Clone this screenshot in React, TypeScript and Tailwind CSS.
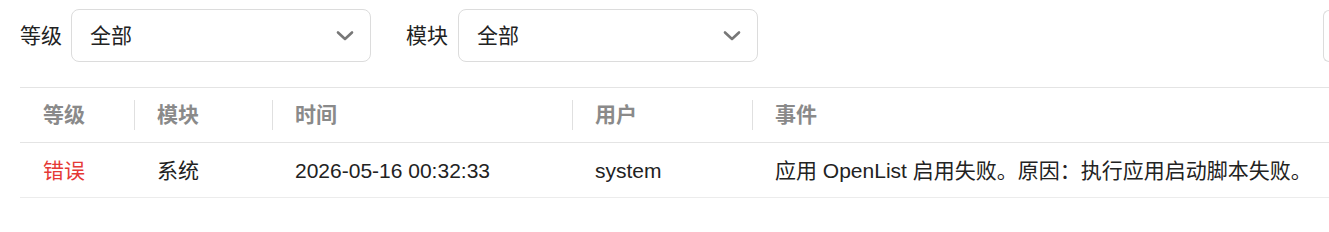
import React from "react";

function Chevron() {
  return (
    <svg width="18" height="12" viewBox="0 0 18 12" fill="none">
      <path d="M2 2.5 L9 9 L16 2.5" stroke="#777" strokeWidth="2.6" strokeLinecap="round" strokeLinejoin="round" />
    </svg>
  );
}

function Select({ value }: { value: string }) {
  return (
    <div className="w-[300px] h-[53px] border border-[#dcdcdc] rounded-[8px] flex items-center justify-between pl-[18px] pr-[16px] bg-white">
      <span className="text-[21px] text-[#222]">{value}</span>
      <Chevron />
    </div>
  );
}

export default function App() {
  const font = { fontFamily: '"Liberation Sans", "Noto Sans CJK SC", sans-serif' };
  const headers = [
    { t: "等级", w: "w-[114px]" },
    { t: "模块", w: "w-[138px]" },
    { t: "时间", w: "w-[300px]" },
    { t: "用户", w: "w-[180px]" },
    { t: "事件", w: "flex-1" },
  ];
  const row = [
    { t: "错误", w: "w-[114px]", c: "text-[#e53935]" },
    { t: "系统", w: "w-[138px]", c: "text-[#222]" },
    { t: "2026-05-16 00:32:33", w: "w-[300px]", c: "text-[#222]" },
    { t: "system", w: "w-[180px]", c: "text-[#222]" },
    { t: "应用 OpenList 启用失败。原因：执行应用启动脚本失败。", w: "flex-1", c: "text-[#222]" },
  ];
  return (
    <div className="w-[1329px] h-[232px] bg-white overflow-hidden" style={font}>
      <div className="flex items-center pl-[20px] pt-[9px] h-[62px]">
        <span className="text-[21px] text-[#222] mr-[9px]">等级</span>
        <Select value="全部" />
        <span className="text-[21px] text-[#222] ml-[35px] mr-[10px]">模块</span>
        <Select value="全部" />
        <div className="ml-auto w-[6px] h-[52px] border border-r-0 border-[#dcdcdc] rounded-l-[8px] mt-[1px]" />
      </div>
      <div className="ml-[20px] mt-[25px] border-t border-[#e4e4e4]">
        <div className="flex h-[55px] items-center border-b border-[#e4e4e4]">
          {headers.map((h, i) => (
            <div key={i} className={`${h.w} flex items-center h-[30px] ${i > 0 ? "pl-[22px] border-l border-[#e0e0e0]" : "pl-[23px]"}`}>
              <span className="text-[21px] font-bold text-[#8a8a8a]">{h.t}</span>
            </div>
          ))}
        </div>
        <div className="flex h-[55px] items-center pt-[1px] border-b border-[#ececec]">
          {row.map((r, i) => (
            <div key={i} className={`${r.w} pl-[23px]`}>
              <span className={`text-[21px] ${r.c} whitespace-nowrap`}>{r.t}</span>
            </div>
          ))}
        </div>
      </div>
    </div>
  );
}
